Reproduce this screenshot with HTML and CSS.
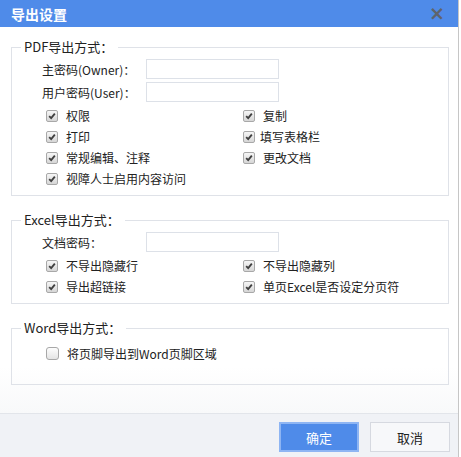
FILE: index.html
```html
<!DOCTYPE html>
<html lang="zh-CN">
<head>
<meta charset="UTF-8">
<title>导出设置</title>
<link rel="stylesheet" href="styles.css">
</head>
<body>
<div class="dialog">
    <div class="title-bar">
        <span class="title">导出设置</span>
        <span class="close">×</span>
    </div>

    <div class="content">
        <fieldset>
            <legend>PDF导出方式：</legend>
            <div class="field-row">
                <label>主密码(Owner)：</label>
                <input type="password" class="pwd">
            </div>
            <div class="field-row">
                <label>用户密码(User)：</label>
                <input type="password" class="pwd">
            </div>
            <div class="checks">
                <div class="check"><span class="box on"><svg viewBox="0 0 12 12"><path d="M2.6 6.2 L5 8.6 L9.4 3.2"/></svg></span><span class="txt">权限</span></div>
                <div class="check"><span class="box on"><svg viewBox="0 0 12 12"><path d="M2.6 6.2 L5 8.6 L9.4 3.2"/></svg></span><span class="txt">复制</span></div>
                <div class="check"><span class="box on"><svg viewBox="0 0 12 12"><path d="M2.6 6.2 L5 8.6 L9.4 3.2"/></svg></span><span class="txt">打印</span></div>
                <div class="check"><span class="box on"><svg viewBox="0 0 12 12"><path d="M2.6 6.2 L5 8.6 L9.4 3.2"/></svg></span><span class="txt tight">填写表格栏</span></div>
                <div class="check"><span class="box on"><svg viewBox="0 0 12 12"><path d="M2.6 6.2 L5 8.6 L9.4 3.2"/></svg></span><span class="txt">常规编辑、注释</span></div>
                <div class="check"><span class="box on"><svg viewBox="0 0 12 12"><path d="M2.6 6.2 L5 8.6 L9.4 3.2"/></svg></span><span class="txt">更改文档</span></div>
                <div class="check"><span class="box on"><svg viewBox="0 0 12 12"><path d="M2.6 6.2 L5 8.6 L9.4 3.2"/></svg></span><span class="txt">视障人士启用内容访问</span></div>
            </div>
        </fieldset>

        <fieldset>
            <legend>Excel导出方式：</legend>
            <div class="field-row">
                <label>文档密码：</label>
                <input type="password" class="pwd">
            </div>
            <div class="checks">
                <div class="check"><span class="box on"><svg viewBox="0 0 12 12"><path d="M2.6 6.2 L5 8.6 L9.4 3.2"/></svg></span><span class="txt">不导出隐藏行</span></div>
                <div class="check"><span class="box on"><svg viewBox="0 0 12 12"><path d="M2.6 6.2 L5 8.6 L9.4 3.2"/></svg></span><span class="txt">不导出隐藏列</span></div>
                <div class="check"><span class="box on"><svg viewBox="0 0 12 12"><path d="M2.6 6.2 L5 8.6 L9.4 3.2"/></svg></span><span class="txt">导出超链接</span></div>
                <div class="check"><span class="box on"><svg viewBox="0 0 12 12"><path d="M2.6 6.2 L5 8.6 L9.4 3.2"/></svg></span><span class="txt">单页Excel是否设定分页符</span></div>
            </div>
        </fieldset>

        <fieldset class="word">
            <legend>Word导出方式：</legend>
            <div class="checks">
                <div class="check"><span class="box"></span><span class="txt">将页脚导出到Word页脚区域</span></div>
            </div>
        </fieldset>
    </div>

    <div class="footer">
        <button class="btn ok">确定</button>
        <button class="btn cancel">取消</button>
    </div>
</div>
</body>
</html>
```

FILE: styles.css
```css
body {
    margin: 0;
    background: #fff;
    font-family: "Noto Sans CJK SC", "Liberation Sans", sans-serif;
    color: #222;
}
.dialog {
    width: 458px;
    height: 457px;
    border-right: 1px solid #c6c6c6;
    display: flex;
    flex-direction: column;
    background: #fff;
}
.title-bar {
    height: 27px;
    background: #4f8be9;
    display: flex;
    align-items: center;
    justify-content: space-between;
    padding: 0 13px 0 11px;
}
.title {
    color: #fff;
    font-size: 14px;
    font-weight: bold;
}
.close {
    color: #5f646c;
    font-size: 19px;
    font-weight: bold;
    font-family: "DejaVu Sans", sans-serif;
    line-height: 1;
}
.content {
    flex: 1;
    padding-top: 11px;
    background: linear-gradient(#fff 88%, #f8f9fa);
}
fieldset {
    margin: 0 9px 15px 11px;
    padding: 0 0 6px 0;
    border: 1px solid #dfe2e8;
    min-width: 0;
}
legend {
    font-size: 13px;
    line-height: 18px;
    margin-left: 9px;
    padding: 0 5px 0 3px;
}
.field-row {
    display: flex;
    align-items: center;
    height: 20px;
    margin-top: 3px;
    padding-left: 30px;
}
.field-row label {
    width: 104px;
    font-size: 12px;
}
.pwd {
    width: 133px;
    height: 20px;
    box-sizing: border-box;
    border: 1px solid #dde1e8;
    margin: 0;
    padding: 0 3px;
}
.checks {
    display: grid;
    grid-template-columns: 197px 1fr;
    grid-auto-rows: 21px;
    margin-top: 3px;
    padding-left: 34px;
}
.check {
    display: flex;
    align-items: center;
    font-size: 12px;
}
.box {
    width: 10px;
    height: 10px;
    border: 1px solid #a8a8a8;
    border-radius: 2px;
    background: linear-gradient(#f6f6f6, #d6d6d6);
    display: flex;
}
.box svg {
    width: 10px;
    height: 10px;
}
.box svg path {
    fill: none;
    stroke: #3f3f3f;
    stroke-width: 2.2;
}
.txt {
    margin-left: 8px;
}
.txt.tight {
    margin-left: 5px;
}
.word {
    padding-bottom: 20px;
}
.word .checks {
    margin-top: 6px;
}
.word .box {
    width: 11px;
    height: 11px;
    border-radius: 3px;
    background: linear-gradient(#fdfdfd, #e4e4e4);
}
.footer {
    height: 44px;
    box-sizing: border-box;
    background: #f0f2f6;
    border-top: 1px solid #e2e5ea;
    display: flex;
    justify-content: flex-end;
    align-items: flex-start;
    padding: 8px 8px 0 0;
    gap: 11px;
}
.btn {
    width: 80px;
    height: 30px;
    font-family: inherit;
    font-size: 13px;
    margin: 0;
    padding: 0;
    cursor: pointer;
}
.ok {
    background: #4f8be9;
    border: 2px solid #8eb5f3;
    color: #fff;
}
.cancel {
    background: #f7f8fa;
    border: 1px solid #d6d9e0;
    color: #222;
}
```
